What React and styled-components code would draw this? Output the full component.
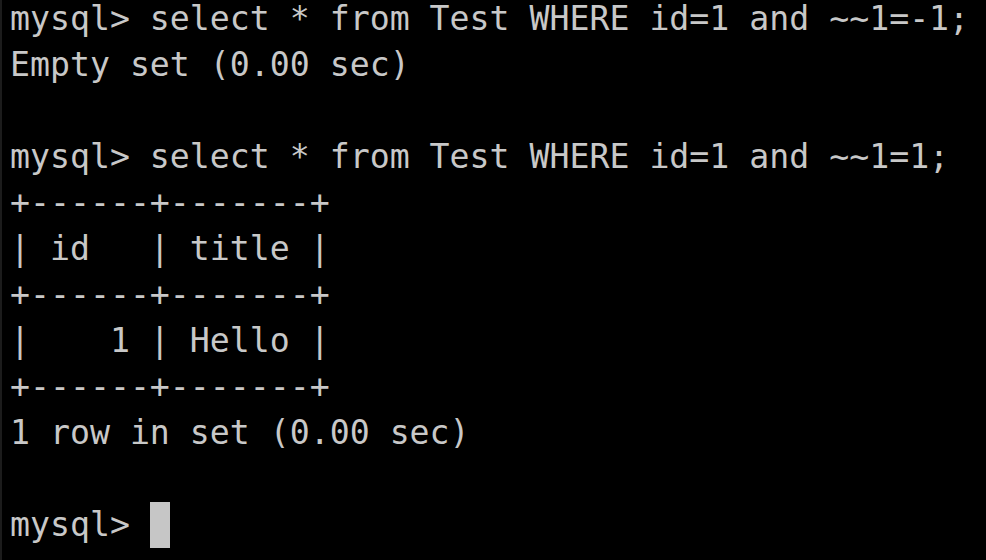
import React from "react";
import styled, { createGlobalStyle } from "styled-components";

const Global = createGlobalStyle`
  html, body { margin: 0; padding: 0; background: #000; }
  body { width: 986px; height: 560px; overflow: hidden; }
`;

const Terminal = styled.div`
  width: 986px;
  height: 560px;
  box-sizing: border-box;
  background: #000;
  border-left: 2px solid #1c1c1c;
  padding: 0 0 0 8px;
  overflow: hidden;
  font-family: "DejaVu Sans Mono", "Liberation Mono", monospace;
  font-size: 33.2px;
  color: #c8c8c8;
`;

const Screen = styled.div`
  margin-top: -4px;
  display: flex;
  flex-direction: column;
`;

const Line = styled.div`
  height: 46px;
  line-height: 46px;
  white-space: pre;
  display: flex;
  align-items: center;
`;

const Cursor = styled.span`
  display: inline-block;
  width: 20px;
  height: 46px;
  background: #c6c6c6;
`;

const lines = [
  "mysql> select * from Test WHERE id=1 and ~~1=-1;",
  "Empty set (0.00 sec)",
  "",
  "mysql> select * from Test WHERE id=1 and ~~1=1;",
  "+------+-------+",
  "| id   | title |",
  "+------+-------+",
  "|    1 | Hello |",
  "+------+-------+",
  "1 row in set (0.00 sec)",
  "",
];

export default function App() {
  return (
    <>
      <Global />
      <Terminal>
        <Screen>
          {lines.map((l, i) => (
            <Line key={i}>{l}</Line>
          ))}
          <Line>
            {"mysql> "}
            <Cursor />
          </Line>
        </Screen>
      </Terminal>
    </>
  );
}
